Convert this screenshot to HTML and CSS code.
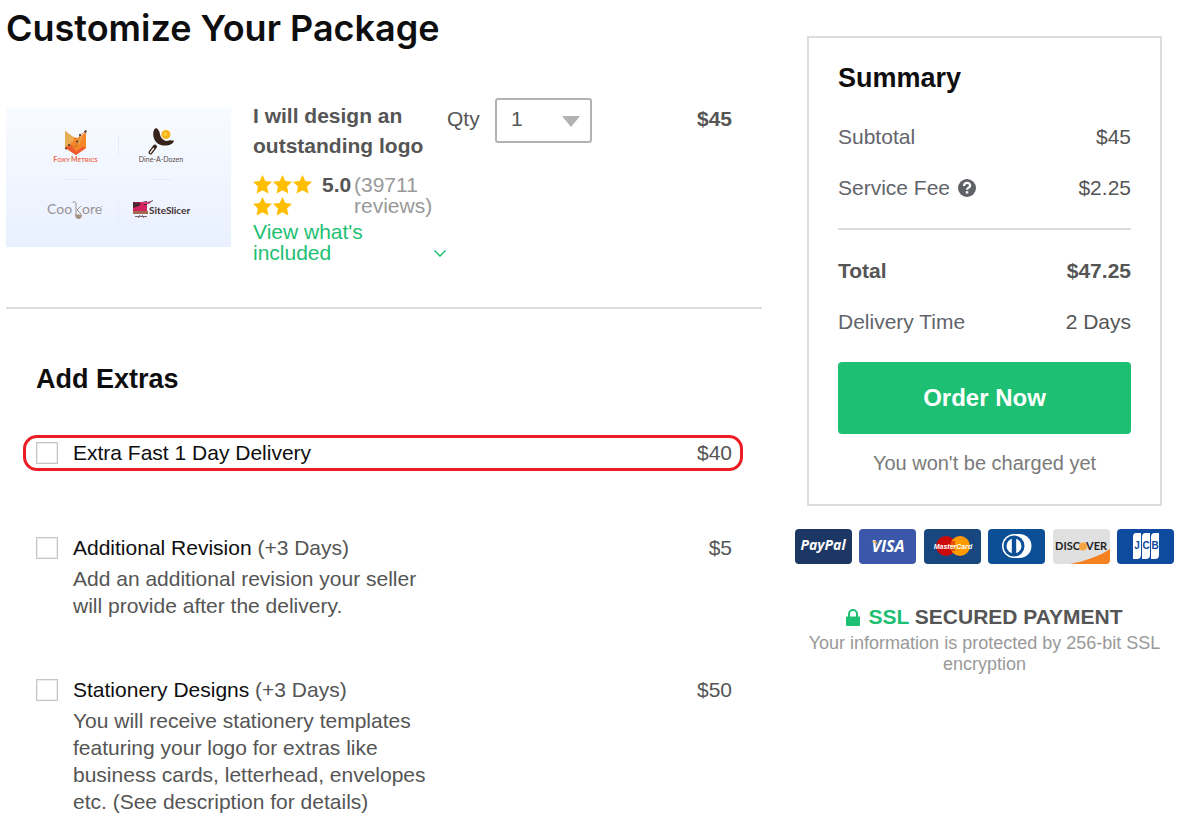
FILE: index.html
```
<!DOCTYPE html>
<html lang="en">
<head>
<meta charset="utf-8">
<meta name="viewport" content="width=device-width, initial-scale=1">
<title>Customize Your Package</title>
<link rel="stylesheet" href="styles.css">
</head>
<body>
<svg class="defs" aria-hidden="true">
  <symbol id="star" viewBox="0 0 18 18"><path d="M9 0l2.700 5.800 6.300.7-4.700 4.300 1.300 6.700L9 14.500 3.400 17.500l1.300-6.700L0 6.500l6.300-.7z" fill="#ffbe00"/></symbol>
</svg>
<div class="page">
  <main class="main">
    <h1 class="page-title">Customize Your Package</h1>

    <section class="product">
      <svg class="thumb" viewBox="0 0 225 139" role="img" aria-label="Logo samples">
        <defs><linearGradient id="sky" x1="0" y1="0" x2="0" y2="1"><stop offset="0" stop-color="#f8fbff"/><stop offset="1" stop-color="#e9f0ff"/></linearGradient></defs>
        <rect width="225" height="139" fill="url(#sky)"/>
        <g stroke="#e6ecfa" fill="none"><path d="M112.500 27v21M112.500 93v22M59 71.500h22M145 71.500h22"/></g>
        <g>
          <path d="M59 23l8 6 5 1 8-6v16l-10 7-11-7z" fill="#f5862a"/>
          <path d="M59 23l8 6 1 3-5 5-4 2z" fill="#e9ad55"/>
          <path d="M70 34l4-7 3 1-4 9z" fill="#eda04a"/>
          <path d="M59 39.500l6-2 5 6 7-5 3 1.500-10 7z" fill="#f15a31"/>
          <path d="M60 40.500l3-3.500 7 2 4-12 5.500-3.500" fill="none" stroke="#b8642a" stroke-width=".6"/>
          <g fill="#4a3528"><circle cx="60" cy="40.500" r="1"/><circle cx="63" cy="37" r="1"/><circle cx="71" cy="33.500" r="1"/><circle cx="74" cy="27" r="1.100"/><circle cx="79.500" cy="23.500" r="1.200"/></g>
          <text x="69.500" y="54" text-anchor="middle" class="logo-foxy">F<tspan class="small-cap">OXY </tspan>M<tspan class="small-cap">ETRICS</tspan></text>
        </g>
        <g>
          <path d="M151 20.500c-1.500-.8-3 .5-3.500 3-1 5 1 10 5 12.500 4 2 9 2 12 .5 2-1 3-2 3.500-4-2 .5-3-1-5 0-3 1-5 0-7-2-3-3-1-7-5-10z" fill="#35231a"/>
          <circle cx="160" cy="26.500" r="4.500" fill="#f6b318"/><circle cx="159.500" cy="26" r="2" fill="#ffcc3c"/>
          <path d="M149 38.500l-4.500 6" stroke="#35231a" stroke-width="4" stroke-linecap="round"/><path d="M147.500 40.500l-3 4" stroke="#e9e7e8" stroke-width="1.500" stroke-linecap="round"/>
          <text x="155" y="54" text-anchor="middle" class="logo-dine">Dine-A-Dozen</text>
        </g>
        <g>
          <text x="41" y="106" class="logo-cook">Coo</text><text x="76" y="106" class="logo-cook">ore</text>
          <path d="M67 95c0-2 3-2 3 1v12M75 98l-4 4 4 4" fill="none" stroke="#9b8f88"/><path d="M69 106.500h7c0 6-7 6-7 0z" fill="#a39284"/><path d="M95 98.500h2" stroke="#b3aaa5" stroke-width=".5"/>
        </g>
        <g>
          <path d="M127 94h14v10h-14z" fill="#d3245f"/><path d="M127 94l3 1 2-1 3 2-2 2-3 1-3 1zM136 94l5-1v4h-3z" fill="#49252c"/>
          <path d="M136 94h5l5-1-3 3h-6z" fill="#e23b7a"/><path d="M142 95l5-2.500" stroke="#66565a"/><path d="M127 103h15v3h-15z" fill="#a5674d"/><path d="M129 108.500h12M132 110l2-3M138 110l-2-3" stroke="#796665"/>
          <text x="143" y="106" class="logo-slicer">SiteSlicer</text>
        </g>
      </svg>
      <div class="info">
        <h2 class="product-name">I will design an outstanding logo</h2>
        <div class="rating">
          <span class="stars" role="img" aria-label="5 stars"><svg><use href="#star"/></svg><svg><use href="#star"/></svg><svg><use href="#star"/></svg><svg><use href="#star"/></svg><svg><use href="#star"/></svg></span>
          <strong class="score">5.0</strong>
          <span class="reviews">(39711 reviews)</span>
        </div>
        <a class="included" href="#included"><span>View what's included</span>
          <svg class="chevron" viewBox="0 0 12 7"><path d="M.5.500L6 6l5.500-5.500" fill="none" stroke="currentColor" stroke-width="1.500"/></svg></a>
      </div>
      <label class="qty-label" for="qty">Qty</label>
      <div class="qty">
        <select id="qty"><option>1</option><option>2</option><option>3</option></select>
        <svg class="caret" viewBox="0 0 18 11"><path d="M0 0h18l-9 11z" fill="#b2b2b2"/></svg>
      </div>
      <strong class="product-price">$45</strong>
    </section>

    <section class="extras">
      <h2 class="heading">Add Extras</h2>
      <div class="extra highlighted">
        <input type="checkbox" id="fast">
        <label class="extra-name" for="fast">Extra Fast 1 Day Delivery</label>
        <span class="extra-price">$40</span>
      </div>
      <div class="extra">
        <input type="checkbox" id="revision">
        <label class="extra-name" for="revision">Additional Revision <span class="days">(+3 Days)</span></label>
        <span class="extra-price">$5</span>
        <p class="extra-text">Add an additional revision your seller will provide after the delivery.</p>
      </div>
      <div class="extra">
        <input type="checkbox" id="stationery">
        <label class="extra-name" for="stationery">Stationery Designs <span class="days">(+3 Days)</span></label>
        <span class="extra-price">$50</span>
        <p class="extra-text">You will receive stationery templates featuring your logo for extras like business cards, letterhead, envelopes etc. (See description for details)</p>
      </div>
    </section>
  </main>

  <aside class="side">
    <section class="summary">
      <h2 class="heading">Summary</h2>
      <dl class="lines">
        <div class="line"><dt>Subtotal</dt><dd>$45</dd></div>
        <div class="line"><dt>Service Fee <svg class="help" viewBox="0 0 18 18"><circle cx="9" cy="9" r="9" fill="#5f6166"/><path d="M6 7c0-4 6.200-4 6.200-.5C12.200 8.800 9 8.500 9 10.800" fill="none" stroke="#fff" stroke-width="2.200"/><path d="M7.800 12.200h2.500v2.300H7.800z" fill="#fff"/></svg></dt><dd>$2.25</dd></div>
      </dl>
      <dl class="lines totals">
        <div class="line total"><dt>Total</dt><dd>$47.25</dd></div>
        <div class="line"><dt>Delivery Time</dt><dd>2 Days</dd></div>
      </dl>
      <button class="order" type="button">Order Now</button>
      <p class="note">You won't be charged yet</p>
    </section>

    <div class="cards">
      <svg class="pay" viewBox="0 0 57 35"><rect width="57" height="35" rx="4" fill="#1c3764"/><text x="28" y="21" text-anchor="middle" class="t-paypal">PayPal</text></svg>
      <svg class="pay" viewBox="0 0 57 35"><rect width="57" height="35" rx="4" fill="#3a57a9"/><text x="29" y="23" text-anchor="middle" class="t-visa">VISA</text><path d="M12.500 12h4.500l2 5c-1.500-2.500-3.500-4-6.500-4.500z" fill="#f0a63c"/></svg>
      <svg class="pay" viewBox="0 0 57 35"><rect width="57" height="35" rx="4" fill="#17477e"/><circle cx="22" cy="17" r="10" fill="#cc0a0a"/><circle cx="36" cy="17" r="10" fill="#f90"/><path d="M27 13h4M26 15h5M26 19h5M27 21h4" stroke="#cc0a0a"/><text x="29" y="20" text-anchor="middle" class="t-master">MasterCard</text></svg>
      <svg class="pay" viewBox="0 0 57 35"><rect width="57" height="35" rx="4" fill="#0c4f96"/><path d="M25 5h6c8 0 12.500 6 12.500 12S39 29 31 29h-6z" fill="#fff"/><circle cx="26" cy="17" r="12" fill="#fff"/><circle cx="26" cy="17" r="10.500" fill="#0c4f96"/><circle cx="26" cy="17" r="7.500" fill="#fff"/><path d="M23.800 9h4.400v16h-4.400z" fill="#0c4f96"/></svg>
      <svg class="pay" viewBox="0 0 57 35"><rect width="57" height="35" rx="4" fill="#e0e0e0"/><path d="M17 35c15-3 30-8 40-15v11q0 4-4 4z" fill="#f58220"/><text x="27" y="21" text-anchor="end" class="t-discover">DISC</text><circle cx="30" cy="17.500" r="4" fill="#f7a544"/><text x="33" y="21" class="t-discover">VER</text></svg>
      <svg class="pay" viewBox="0 0 57 35"><rect width="57" height="35" rx="4" fill="#0e4a9d"/><g fill="#fff"><path d="M19 4h5v22q0 4-4 4h-4V8q0-4 3-4z"/><path d="M28.500 4H33v22q0 4-4 4h-4V8q0-4 3.500-4z"/><path d="M37.500 4H42v22q0 4-4 4h-4V8q0-4 3.500-4z"/></g><g class="t-jcb" text-anchor="middle"><text x="20" y="20">J</text><text x="29" y="20">C</text><text x="38" y="20">B</text></g></svg>
    </div>

    <section class="secure">
      <h2 class="secure-title"><svg class="lock" viewBox="0 0 14 17"><path d="M3 8V5a4 4 0 0 1 8 0v3" fill="none" stroke="#1dbf73" stroke-width="2"/><rect y="7.500" width="14" height="9.500" rx="1" fill="#1dbf73"/></svg><span><span class="ssl">SSL</span> SECURED PAYMENT</span></h2>
      <p class="secure-text">Your information is protected by 256-bit SSL encryption</p>
    </section>
  </aside>
</div>
</body>
</html>
```
FILE: styles.css
```
* { box-sizing: border-box; }
body, h1, h2, p, dl, dd { margin: 0; }
body {
  background: #fff;
  color: #555;
  font: 21px/30px "Liberation Sans", Arial, sans-serif;
}
.defs { display: none; }
.page { display: flex; gap: 33px; align-items: flex-start; padding: 6px 6px 10px; }
.main { flex: 1; min-width: 0; }
.side { flex: 0 0 379px; padding-top: 30px; }

.page-title { font: 600 36px/44px Inter, sans-serif; color: #0e0e0f; margin-bottom: 48px; }
.heading { font-size: 27px; line-height: 34px; color: #0e0e0f; }

.product {
  display: flex;
  align-items: flex-start;
  padding-bottom: 44px;
  border-bottom: 2px solid #ddd;
}
.thumb { width: 225px; height: 139px; margin: 10px 22px 0 0; flex: none; }
.info { width: 194px; padding-top: 3px; flex: none; }
.product-name { font-size: 21px; line-height: 30px; }
.rating { display: flex; line-height: 21px; margin: 13px 0 5px; }
.stars { display: flex; flex-wrap: wrap; width: 69px; padding-top: 1px; gap: 3px 1px; flex: none; }
.stars svg { width: 19px; height: 19px; }
.score { width: 32px; flex: none; }
.reviews { color: #999; }
.included { display: flex; justify-content: space-between; align-items: flex-end; line-height: 21px; color: #1dbf73; text-decoration: none; }
.included span { width: 130px; }
.chevron { width: 12px; height: 7px; margin: 0 1px 6px 0; }
.qty-label { width: 48px; padding-top: 6px; }
.qty { position: relative; width: 97px; }
.qty select {
  appearance: none;
  width: 100%;
  height: 45px;
  padding: 0 14px 3px;
  border: 2px solid #b2b2b2;
  border-radius: 3px;
  background: #fff;
  color: #555;
  font: inherit;
}
.caret { position: absolute; right: 12px; top: 18px; width: 18px; height: 11px; pointer-events: none; }
.product-price { margin-left: auto; padding: 6px 30px 0 0; }

.extras { padding: 53px 30px 0; }
.extras .heading { margin-bottom: 39px; }
.extra {
  display: grid;
  grid-template-columns: 22px 1fr auto;
  column-gap: 15px;
  align-items: center;
  margin-bottom: 56px;
}
.extra:last-child { margin-bottom: 0; }
.highlighted { margin: 0 -11px 62px -13px; padding: 0 8px 0 10px; border: 3px solid #ed1c24; border-radius: 14px; }
.extra input { appearance: none; width: 22px; height: 22px; margin: 0; border: 1px solid #c5c5c5; box-shadow: inset 0 0 0 1px #eee; background: #fff; }
.extra input:checked { background: #1dbf73; }
.extra-name { color: #0e0e0f; }
.days { color: #555; }
.extra-text { grid-column: 2; max-width: 360px; margin-top: 2px; line-height: 27px; }

.summary { margin: 0 12px; padding: 23px 29px 29px; border: 2px solid #ddd; }
.lines { margin-top: 16px; }
.line { display: flex; justify-content: space-between; line-height: 51px; }
.line dt { color: #62646a; }
.totals { margin-top: 15px; padding: 15px 0; border-top: 2px solid #ddd; }
.total, .total dt { font-weight: 700; color: #555; }
.help { width: 18px; height: 18px; margin-left: 2px; vertical-align: -2px; }
.order {
  display: block;
  width: 100%;
  height: 72px;
  border: 0;
  border-radius: 4px;
  background: #1dbf73;
  color: #fff;
  font: 700 24px/30px "Liberation Sans", Arial, sans-serif;
}
.note { margin-top: 17px; font-size: 20px; line-height: 24px; text-align: center; color: #7a7a7a; }

.cards { display: flex; justify-content: space-between; margin-top: 23px; }
.pay { width: 57px; height: 35px; }
.secure { margin-top: 40px; padding: 0 12px; text-align: center; }
.secure-title { display: flex; justify-content: center; align-items: center; gap: 8px; font-size: 21px; line-height: 26px; }
.lock { width: 14px; height: 17px; }
.ssl { color: #1dbf73; }
.secure-text { margin-top: 3px; font-size: 18px; line-height: 21px; color: #999; }

.logo-foxy { font: 700 7px Lato, sans-serif; fill: #ef6a4b; }
.small-cap { font-size: 6px; }
.logo-dine { font: 7px Lato, sans-serif; fill: #5a4a48; }
.logo-cook { font: 14px Lato, sans-serif; fill: #9a9291; }
.logo-slicer { font: 700 10px Lato, sans-serif; fill: #43302f; }
.t-paypal { font: italic 700 14px "Open Sans", sans-serif; fill: #fff; }
.t-visa { font: italic 700 16px "Open Sans", sans-serif; fill: #fff; }
.t-master { font: italic 700 7px "Liberation Sans", sans-serif; fill: #fff; }
.t-discover { font: 700 11px Lato, sans-serif; fill: #222; }
.t-jcb { font: 700 10px "Liberation Sans", sans-serif; fill: #0e4a9d; }
```
